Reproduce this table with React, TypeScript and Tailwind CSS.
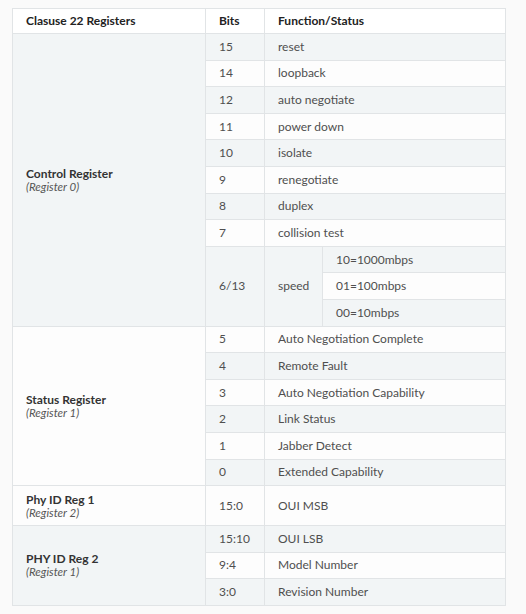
import React from "react";

type Row = {
  label?: { name: string; sub: string; span: number };
  bits?: { text: string; span: number };
  fn?: string;
  speed?: { span: number };
  sub?: string;
  tall?: boolean;
};

const rows: Row[] = [
  { label: { name: "Control Register", sub: "(Register 0)", span: 11 }, bits: { text: "15", span: 1 }, fn: "reset" },
  { bits: { text: "14", span: 1 }, fn: "loopback" },
  { bits: { text: "12", span: 1 }, fn: "auto negotiate" },
  { bits: { text: "11", span: 1 }, fn: "power down" },
  { bits: { text: "10", span: 1 }, fn: "isolate" },
  { bits: { text: "9", span: 1 }, fn: "renegotiate" },
  { bits: { text: "8", span: 1 }, fn: "duplex" },
  { bits: { text: "7", span: 1 }, fn: "collision test" },
  { bits: { text: "6/13", span: 3 }, speed: { span: 3 }, sub: "10=1000mbps" },
  { sub: "01=100mbps" },
  { sub: "00=10mbps" },
  { label: { name: "Status Register", sub: "(Register 1)", span: 6 }, bits: { text: "5", span: 1 }, fn: "Auto Negotiation Complete" },
  { bits: { text: "4", span: 1 }, fn: "Remote Fault" },
  { bits: { text: "3", span: 1 }, fn: "Auto Negotiation Capability" },
  { bits: { text: "2", span: 1 }, fn: "Link Status" },
  { bits: { text: "1", span: 1 }, fn: "Jabber Detect" },
  { bits: { text: "0", span: 1 }, fn: "Extended Capability" },
  { label: { name: "Phy ID Reg 1", sub: "(Register 2)", span: 1 }, bits: { text: "15:0", span: 1 }, fn: "OUI MSB", tall: true },
  { label: { name: "PHY ID Reg 2", sub: "(Register 1)", span: 3 }, bits: { text: "15:10", span: 1 }, fn: "OUI LSB" },
  { bits: { text: "9:4", span: 1 }, fn: "Model Number" },
  { bits: { text: "3:0", span: 1 }, fn: "Revision Number" },
];

export default function App() {
  return (
    <div
      className="min-h-[614px] w-[526px] bg-[#fafafa] pl-[12px] pt-[8px]"
      style={{ fontFamily: "Lato, 'Open Sans', sans-serif" }}
    >
      <table className="w-[493px] table-fixed border-collapse border border-[#e1e4e6] text-[12px] text-[#4f4f4f]">
        <colgroup>
          <col className="w-[193px]" />
          <col className="w-[59px]" />
          <col className="w-[58px]" />
          <col className="w-[183px]" />
        </colgroup>
        <thead>
          <tr className="h-[25px] bg-white">
            <th className="border border-[#e1e4e6] px-[13px] text-left font-bold text-[#222]">Clasuse 22 Registers</th>
            <th className="border border-[#e1e4e6] px-[13px] text-left font-bold text-[#222]">Bits</th>
            <th colSpan={2} className="border border-[#e1e4e6] px-[13px] text-left font-bold text-[#222]">
              Function/Status
            </th>
          </tr>
        </thead>
        <tbody>
          {rows.map((r, i) => (
            <tr
              key={i}
              className={`${r.tall ? "h-[40px]" : "h-[26.6px]"} ${i % 2 === 0 ? "bg-[#f2f5f6]" : "bg-[#fdfdfd]"}`}
            >
              {r.label && (
                <td rowSpan={r.label.span} className="border border-[#e1e4e6] px-[13px] align-middle">
                  <div className="font-bold leading-[13px] text-[#333]">{r.label.name}</div>
                  <div className="text-[11.5px] italic leading-[13px] text-[#555]">{r.label.sub}</div>
                </td>
              )}
              {r.bits && (
                <td rowSpan={r.bits.span} className="border border-[#e1e4e6] px-[13px] align-middle">
                  {r.bits.text}
                </td>
              )}
              {r.fn && (
                <td colSpan={2} className="border border-[#e1e4e6] px-[13px] align-middle">
                  {r.fn}
                </td>
              )}
              {r.speed && (
                <td rowSpan={r.speed.span} className="border border-[#e1e4e6] px-[13px] align-middle">
                  speed
                </td>
              )}
              {r.sub && <td className="border border-[#e1e4e6] px-[13px] align-middle">{r.sub}</td>}
            </tr>
          ))}
        </tbody>
      </table>
    </div>
  );
}
